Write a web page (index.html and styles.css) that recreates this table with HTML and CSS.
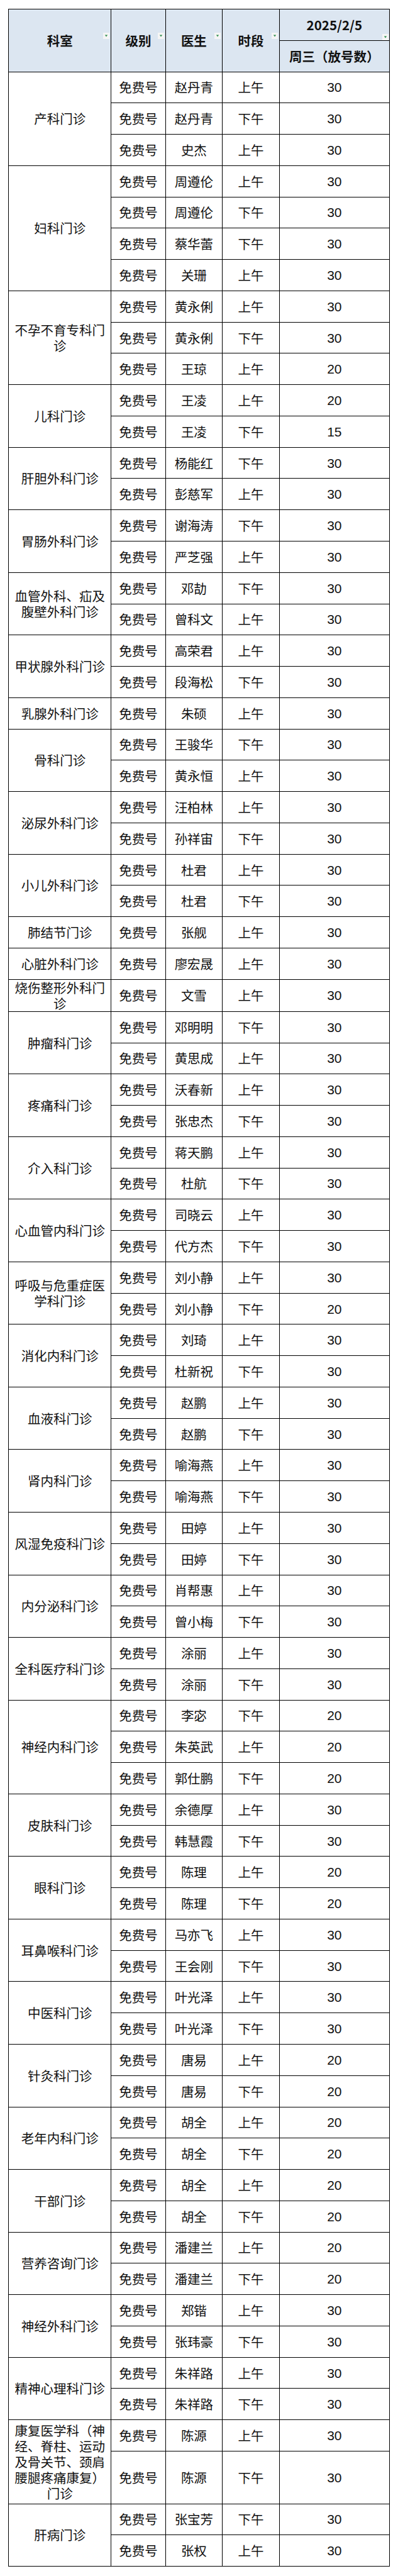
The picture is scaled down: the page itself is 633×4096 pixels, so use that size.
FILE: index.html
```html
<!DOCTYPE html>
<html lang="zh-CN">
<head>
<meta charset="utf-8">
<title>门诊放号表</title>
<link rel="stylesheet" href="styles.css">
</head>
<body>
<table class="sheet">
<colgroup><col class="c1"><col class="c2"><col class="c3"><col class="c4"><col class="c5"></colgroup>
<thead>
<tr class="h1">
<th rowspan="2">科室<span class="flt"><svg viewBox="0 0 10 10"><polygon points="2.8,3.6 7.2,3.6 5,6.6"/></svg></span></th>
<th rowspan="2">级别<span class="flt"><svg viewBox="0 0 10 10"><polygon points="2.8,3.6 7.2,3.6 5,6.6"/></svg></span></th>
<th rowspan="2">医生<span class="flt"><svg viewBox="0 0 10 10"><polygon points="2.8,3.6 7.2,3.6 5,6.6"/></svg></span></th>
<th rowspan="2">时段<span class="flt"><svg viewBox="0 0 10 10"><polygon points="2.8,3.6 7.2,3.6 5,6.6"/></svg></span></th>
<th class="date">2025/2/5<span class="flt flt-date"><svg viewBox="0 0 10 10"><polygon points="2.8,3.6 7.2,3.6 5,6.6"/></svg></span></th>
</tr>
<tr class="h2"><th>周三（放号数）</th></tr>
</thead>
<tbody>
<tr><td class="dept" rowspan="3">产科门诊</td><td>免费号</td><td>赵丹青</td><td>上午</td><td class="n">30</td></tr>
<tr><td>免费号</td><td>赵丹青</td><td>下午</td><td class="n">30</td></tr>
<tr><td>免费号</td><td>史杰</td><td>上午</td><td class="n">30</td></tr>

<tr><td class="dept" rowspan="4">妇科门诊</td><td>免费号</td><td>周遵伦</td><td>上午</td><td class="n">30</td></tr>
<tr><td>免费号</td><td>周遵伦</td><td>下午</td><td class="n">30</td></tr>
<tr><td>免费号</td><td>蔡华蕾</td><td>下午</td><td class="n">30</td></tr>
<tr><td>免费号</td><td>关珊</td><td>上午</td><td class="n">30</td></tr>

<tr><td class="dept" rowspan="3">不孕不育专科门诊</td><td>免费号</td><td>黄永俐</td><td>上午</td><td class="n">30</td></tr>
<tr><td>免费号</td><td>黄永俐</td><td>下午</td><td class="n">30</td></tr>
<tr><td>免费号</td><td>王琼</td><td>上午</td><td class="n">20</td></tr>

<tr><td class="dept" rowspan="2">儿科门诊</td><td>免费号</td><td>王凌</td><td>上午</td><td class="n">20</td></tr>
<tr><td>免费号</td><td>王凌</td><td>下午</td><td class="n">15</td></tr>

<tr><td class="dept" rowspan="2">肝胆外科门诊</td><td>免费号</td><td>杨能红</td><td>下午</td><td class="n">30</td></tr>
<tr><td>免费号</td><td>彭慈军</td><td>上午</td><td class="n">30</td></tr>

<tr><td class="dept" rowspan="2">胃肠外科门诊</td><td>免费号</td><td>谢海涛</td><td>下午</td><td class="n">30</td></tr>
<tr><td>免费号</td><td>严芝强</td><td>上午</td><td class="n">30</td></tr>

<tr><td class="dept" rowspan="2">血管外科、疝及腹壁外科门诊</td><td>免费号</td><td>邓劼</td><td>下午</td><td class="n">30</td></tr>
<tr><td>免费号</td><td>曾科文</td><td>上午</td><td class="n">30</td></tr>

<tr><td class="dept" rowspan="2">甲状腺外科门诊</td><td>免费号</td><td>高荣君</td><td>上午</td><td class="n">30</td></tr>
<tr><td>免费号</td><td>段海松</td><td>下午</td><td class="n">30</td></tr>

<tr><td class="dept">乳腺外科门诊</td><td>免费号</td><td>朱硕</td><td>上午</td><td class="n">30</td></tr>

<tr><td class="dept" rowspan="2">骨科门诊</td><td>免费号</td><td>王骏华</td><td>下午</td><td class="n">30</td></tr>
<tr><td>免费号</td><td>黄永恒</td><td>上午</td><td class="n">30</td></tr>

<tr><td class="dept" rowspan="2">泌尿外科门诊</td><td>免费号</td><td>汪柏林</td><td>上午</td><td class="n">30</td></tr>
<tr><td>免费号</td><td>孙祥宙</td><td>下午</td><td class="n">30</td></tr>

<tr><td class="dept" rowspan="2">小儿外科门诊</td><td>免费号</td><td>杜君</td><td>上午</td><td class="n">30</td></tr>
<tr><td>免费号</td><td>杜君</td><td>下午</td><td class="n">30</td></tr>

<tr><td class="dept">肺结节门诊</td><td>免费号</td><td>张舰</td><td>上午</td><td class="n">30</td></tr>

<tr><td class="dept">心脏外科门诊</td><td>免费号</td><td>廖宏晟</td><td>上午</td><td class="n">30</td></tr>

<tr><td class="dept">烧伤整形外科门诊</td><td>免费号</td><td>文雪</td><td>上午</td><td class="n">30</td></tr>

<tr><td class="dept" rowspan="2">肿瘤科门诊</td><td>免费号</td><td>邓明明</td><td>下午</td><td class="n">30</td></tr>
<tr><td>免费号</td><td>黄思成</td><td>上午</td><td class="n">30</td></tr>

<tr><td class="dept" rowspan="2">疼痛科门诊</td><td>免费号</td><td>沃春新</td><td>上午</td><td class="n">30</td></tr>
<tr><td>免费号</td><td>张忠杰</td><td>下午</td><td class="n">30</td></tr>

<tr><td class="dept" rowspan="2">介入科门诊</td><td>免费号</td><td>蒋天鹏</td><td>上午</td><td class="n">30</td></tr>
<tr><td>免费号</td><td>杜航</td><td>下午</td><td class="n">30</td></tr>

<tr><td class="dept" rowspan="2">心血管内科门诊</td><td>免费号</td><td>司晓云</td><td>上午</td><td class="n">30</td></tr>
<tr><td>免费号</td><td>代方杰</td><td>下午</td><td class="n">30</td></tr>

<tr><td class="dept" rowspan="2">呼吸与危重症医学科门诊</td><td>免费号</td><td>刘小静</td><td>上午</td><td class="n">30</td></tr>
<tr><td>免费号</td><td>刘小静</td><td>下午</td><td class="n">20</td></tr>

<tr><td class="dept" rowspan="2">消化内科门诊</td><td>免费号</td><td>刘琦</td><td>上午</td><td class="n">30</td></tr>
<tr><td>免费号</td><td>杜新祝</td><td>下午</td><td class="n">30</td></tr>

<tr><td class="dept" rowspan="2">血液科门诊</td><td>免费号</td><td>赵鹏</td><td>上午</td><td class="n">30</td></tr>
<tr><td>免费号</td><td>赵鹏</td><td>下午</td><td class="n">30</td></tr>

<tr><td class="dept" rowspan="2">肾内科门诊</td><td>免费号</td><td>喻海燕</td><td>上午</td><td class="n">30</td></tr>
<tr><td>免费号</td><td>喻海燕</td><td>下午</td><td class="n">30</td></tr>

<tr><td class="dept" rowspan="2">风湿免疫科门诊</td><td>免费号</td><td>田婷</td><td>上午</td><td class="n">30</td></tr>
<tr><td>免费号</td><td>田婷</td><td>下午</td><td class="n">30</td></tr>

<tr><td class="dept" rowspan="2">内分泌科门诊</td><td>免费号</td><td>肖帮惠</td><td>上午</td><td class="n">30</td></tr>
<tr><td>免费号</td><td>曾小梅</td><td>下午</td><td class="n">30</td></tr>

<tr><td class="dept" rowspan="2">全科医疗科门诊</td><td>免费号</td><td>涂丽</td><td>上午</td><td class="n">30</td></tr>
<tr><td>免费号</td><td>涂丽</td><td>下午</td><td class="n">30</td></tr>

<tr><td class="dept" rowspan="3">神经内科门诊</td><td>免费号</td><td>李宓</td><td>下午</td><td class="n">20</td></tr>
<tr><td>免费号</td><td>朱英武</td><td>上午</td><td class="n">20</td></tr>
<tr><td>免费号</td><td>郭仕鹏</td><td>下午</td><td class="n">20</td></tr>

<tr><td class="dept" rowspan="2">皮肤科门诊</td><td>免费号</td><td>余德厚</td><td>上午</td><td class="n">30</td></tr>
<tr><td>免费号</td><td>韩慧霞</td><td>下午</td><td class="n">30</td></tr>

<tr><td class="dept" rowspan="2">眼科门诊</td><td>免费号</td><td>陈理</td><td>上午</td><td class="n">20</td></tr>
<tr><td>免费号</td><td>陈理</td><td>下午</td><td class="n">20</td></tr>

<tr><td class="dept" rowspan="2">耳鼻喉科门诊</td><td>免费号</td><td>马亦飞</td><td>上午</td><td class="n">30</td></tr>
<tr><td>免费号</td><td>王会刚</td><td>下午</td><td class="n">30</td></tr>

<tr><td class="dept" rowspan="2">中医科门诊</td><td>免费号</td><td>叶光泽</td><td>上午</td><td class="n">30</td></tr>
<tr><td>免费号</td><td>叶光泽</td><td>下午</td><td class="n">30</td></tr>

<tr><td class="dept" rowspan="2">针灸科门诊</td><td>免费号</td><td>唐易</td><td>上午</td><td class="n">20</td></tr>
<tr><td>免费号</td><td>唐易</td><td>下午</td><td class="n">20</td></tr>

<tr><td class="dept" rowspan="2">老年内科门诊</td><td>免费号</td><td>胡全</td><td>上午</td><td class="n">20</td></tr>
<tr><td>免费号</td><td>胡全</td><td>下午</td><td class="n">20</td></tr>

<tr><td class="dept" rowspan="2">干部门诊</td><td>免费号</td><td>胡全</td><td>上午</td><td class="n">20</td></tr>
<tr><td>免费号</td><td>胡全</td><td>下午</td><td class="n">20</td></tr>

<tr><td class="dept" rowspan="2">营养咨询门诊</td><td>免费号</td><td>潘建兰</td><td>上午</td><td class="n">20</td></tr>
<tr><td>免费号</td><td>潘建兰</td><td>下午</td><td class="n">20</td></tr>

<tr><td class="dept" rowspan="2">神经外科门诊</td><td>免费号</td><td>郑锴</td><td>上午</td><td class="n">30</td></tr>
<tr><td>免费号</td><td>张玮豪</td><td>下午</td><td class="n">30</td></tr>

<tr><td class="dept" rowspan="2">精神心理科门诊</td><td>免费号</td><td>朱祥路</td><td>上午</td><td class="n">30</td></tr>
<tr><td>免费号</td><td>朱祥路</td><td>下午</td><td class="n">30</td></tr>

<tr><td class="dept" rowspan="2">康复医学科（神经、脊柱、运动及骨关节、颈肩腰腿疼痛康复）门诊</td><td>免费号</td><td>陈源</td><td>上午</td><td class="n">30</td></tr>
<tr class="tall"><td>免费号</td><td>陈源</td><td>下午</td><td class="n">30</td></tr>

<tr><td class="dept" rowspan="2">肝病门诊</td><td>免费号</td><td>张宝芳</td><td>下午</td><td class="n">30</td></tr>
<tr><td>免费号</td><td>张权</td><td>上午</td><td class="n">30</td></tr>
</tbody>
</table>
</body>
</html>
```

FILE: styles.css
```css
html, body {
  margin: 0;
  padding: 0;
  background: #ffffff;
}

body {
  font-family: "Noto Sans CJK SC", "Noto Sans", sans-serif;
  color: #000;
}

.sheet {
  margin: 14px 0 0 13px;
  width: 606px;
  border-collapse: collapse;
  table-layout: fixed;
}

.c1 { width: 163.4px; }
.c2 { width: 86.4px; }
.c3 { width: 90.2px; }
.c4 { width: 91px; }
.c5 { width: 174.7px; }

.sheet th,
.sheet td {
  border: 1px solid #000;
  padding: 0 6px;
  text-align: center;
  vertical-align: middle;
  font-size: 20.5px;
  line-height: 25px;
  white-space: normal;
}

.sheet tr {
  height: 49.77px;
}

.sheet tr.tall {
  height: 83.6px;
}

.sheet th {
  position: relative;
  background: #dce6f1;
  font-weight: bold;
  color: #111;
}

.sheet td {
  font-weight: normal;
  color: #111;
}

.sheet td.n {
  font-family: "Liberation Sans Narrow", "Liberation Sans", sans-serif;
  font-size: 21px;
}

.sheet th.date {
  font-family: "Noto Sans CJK SC", sans-serif;
}

.flt {
  position: absolute;
  right: 2px;
  top: 37px;
  width: 10px;
  height: 10px;
  background: #f5f5f5;
  display: block;
}

.flt svg {
  display: block;
  width: 10px;
  height: 10px;
}

.flt polygon {
  fill: #2f8f4e;
}

.flt-date {
  top: 39px;
  right: 1px;
}
```
